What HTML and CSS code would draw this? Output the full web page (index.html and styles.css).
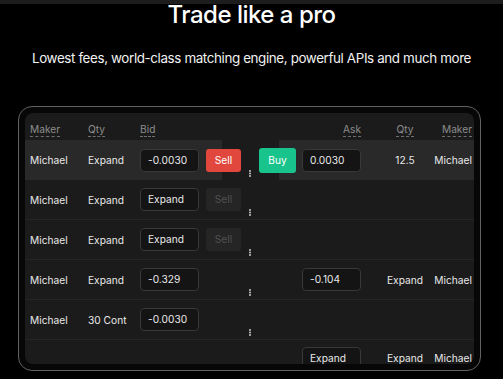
FILE: index.html
```html
<!DOCTYPE html>
<html lang="en">
<head>
	<meta charset="UTF-8">
	<title>Trade like a pro</title>
	<link rel="stylesheet" href="styles.css">
</head>
<body>
	<div class="topbar"></div>
	<h1 class="title">Trade like a pro</h1>
	<p class="subtitle">Lowest fees, world-class matching engine, powerful APIs and much more</p>

	<div class="device">
		<div class="screen">
			<div class="row head">
				<div class="c-maker"><span class="tip">Maker</span></div>
				<div class="c-qty"><span class="tip">Qty</span></div>
				<div class="c-bid"><span class="tip">Bid</span></div>
				<div class="c-ask"><span class="tip">Ask</span></div>
				<div class="c-qty2"><span class="tip">Qty</span></div>
				<div class="c-maker2"><span class="tip">Maker</span></div>
			</div>

			<div class="row active">
				<div class="c-maker">Michael</div>
				<div class="c-qty">Expand</div>
				<div class="field">-0.0030</div>
				<div class="btn sell">Sell</div>
				<div class="mid"><svg class="dots" width="2" height="7" viewBox="0 0 2 7"><circle cx="1" cy="1" r="0.9"/><circle cx="1" cy="3.5" r="0.9"/><circle cx="1" cy="6" r="0.9"/></svg></div>
				<div class="btn buy">Buy</div>
				<div class="field ask">0.0030</div>
				<div class="c-qty2">12.5</div>
				<div class="c-maker2">Michael</div>
			</div>

			<div class="row">
				<div class="c-maker">Michael</div>
				<div class="c-qty">Expand</div>
				<div class="field">Expand</div>
				<div class="btn off">Sell</div>
				<div class="mid"><svg class="dots" width="2" height="7" viewBox="0 0 2 7"><circle cx="1" cy="1" r="0.9"/><circle cx="1" cy="3.5" r="0.9"/><circle cx="1" cy="6" r="0.9"/></svg></div>
			</div>

			<div class="row">
				<div class="c-maker">Michael</div>
				<div class="c-qty">Expand</div>
				<div class="field">Expand</div>
				<div class="btn off">Sell</div>
				<div class="mid"><svg class="dots" width="2" height="7" viewBox="0 0 2 7"><circle cx="1" cy="1" r="0.9"/><circle cx="1" cy="3.5" r="0.9"/><circle cx="1" cy="6" r="0.9"/></svg></div>
			</div>

			<div class="row">
				<div class="c-maker">Michael</div>
				<div class="c-qty">Expand</div>
				<div class="field">-0.329</div>
				<div class="btn none"></div>
				<div class="mid"><svg class="dots" width="2" height="7" viewBox="0 0 2 7"><circle cx="1" cy="1" r="0.9"/><circle cx="1" cy="3.5" r="0.9"/><circle cx="1" cy="6" r="0.9"/></svg></div>
				<div class="btn none buy-slot"></div>
				<div class="field ask">-0.104</div>
				<div class="c-qty2">Expand</div>
				<div class="c-maker2">Michael</div>
			</div>

			<div class="row">
				<div class="c-maker">Michael</div>
				<div class="c-qty">30 Cont</div>
				<div class="field">-0.0030</div>
				<div class="btn none"></div>
				<div class="mid"><svg class="dots" width="2" height="7" viewBox="0 0 2 7"><circle cx="1" cy="1" r="0.9"/><circle cx="1" cy="3.5" r="0.9"/><circle cx="1" cy="6" r="0.9"/></svg></div>
			</div>

			<div class="row last">
				<div class="c-maker"></div>
				<div class="c-qty"></div>
				<div class="slot"></div>
				<div class="btn none"></div>
				<div class="mid"></div>
				<div class="btn none buy-slot"></div>
				<div class="field ask">Expand</div>
				<div class="c-qty2">Expand</div>
				<div class="c-maker2">Michael</div>
			</div>
		</div>
	</div>
</body>
</html>
```

FILE: styles.css
```css
*{
	margin: 0;
	padding: 0;
	box-sizing: border-box;
}
body{
	width: 503px;
	height: 379px;
	overflow: hidden;
	background: #000;
	color: #e8e8e8;
	font-family: Inter, "Noto Sans", sans-serif;
}
.topbar{
	height: 4px;
	background: #1d1d1d;
}
.title{
	height: 22px;
	line-height: 22px;
	font-size: 24px;
	font-weight: 500;
	text-align: center;
	color: #fff;
	letter-spacing: -0.5px;
}
.subtitle{
	margin-top: 23px;
	line-height: 18px;
	font-size: 13.4px;
	text-align: center;
	color: #f2f2f2;
	letter-spacing: -0.38px;
}
.device{
	margin: 39px 0 0 18px;
	width: 463px;
	height: 265px;
	padding: 6px;
	border: 1px solid #626262;
	border-radius: 14px;
	background: #070707;
}
.screen{
	height: 100%;
	background: #1b1b1b;
	border-radius: 8px;
	overflow: hidden;
	font-size: 10.2px;
}
.row{
	display: flex;
	align-items: center;
	height: 40px;
	padding-left: 5px;
	border-bottom: 1px solid #262626;
	white-space: nowrap;
}
.row.active{
	background: linear-gradient(to right, #292929 197px, #1b1b1b 197px, #1b1b1b 254px, #292929 254px);
	border-bottom: none;
}
.row.last{
	align-items: flex-start;
	padding-top: 7px;
}
.row.last .c-qty2,
.row.last .c-maker2{
	line-height: 23px;
}
.head{
	height: 27px;
	border-bottom: none;
	color: #8c8c8c;
	align-items: flex-start;
	padding-top: 10px;
}
.tip{
	border-bottom: 1px dashed #6f6f6f;
	padding-bottom: 1px;
}
.c-maker{
	width: 58px;
}
.c-qty{
	width: 52px;
}
.head .c-bid{
	width: 221px;
}
.head .c-ask{
	width: 0;
	display: flex;
	justify-content: flex-end;
}
.c-qty2{
	width: 86px;
	text-align: center;
	padding-left: 2px;
}
.c-maker2{
	width: 25px;
	display: flex;
	justify-content: flex-end;
}
.field{
	width: 59px;
	height: 23px;
	line-height: 21px;
	padding-left: 7px;
	background: #141414;
	border: 1px solid #383838;
	border-radius: 4px;
}
.slot{
	width: 59px;
}
.field.ask{
	margin-left: 6px;
}
.btn{
	width: 35px;
	height: 23px;
	line-height: 23px;
	margin-left: 7px;
	text-align: center;
	border-radius: 3px;
	color: #fff;
}
.sell{
	background: #e2473d;
}
.buy{
	width: 37px;
	margin-left: 0;
	height: 25px;
	line-height: 25px;
	background: #19c48c;
}
.buy-slot{
	width: 37px;
	margin-left: 0;
}
.off{
	background: #252525;
	color: #505050;
}
.mid{
	width: 18px;
	height: 100%;
	display: flex;
	justify-content: center;
	align-items: flex-end;
	padding-bottom: 3px;
}
.dots{
	display: block;
	fill: #d8d8d8;
}
```
